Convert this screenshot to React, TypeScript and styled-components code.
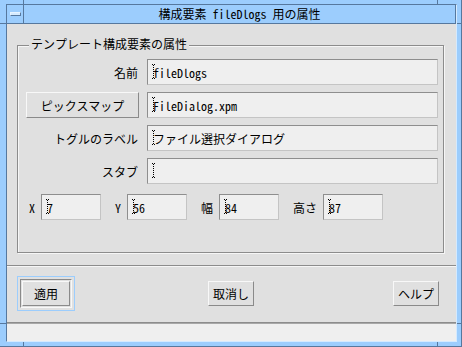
import React from 'react';
import styled, { createGlobalStyle } from 'styled-components';

const DARK = '#56789e';
const BLUE = '#9ccdfd';
const LIGHTBLUE = '#d4eaff';
const GRAY = '#e0e0e0';
const MONO = `"Noto Sans Mono CJK JP", "Noto Sans CJK JP", "DejaVu Sans Mono", monospace`;
const SANS = `"Noto Sans CJK JP", "Noto Sans", sans-serif`;

const Global = createGlobalStyle`
  html, body { margin: 0; padding: 0; background: ${BLUE}; }
  body { font-family: ${SANS}; }
`;

const Frame = styled.div`
  position: relative;
  box-sizing: border-box;
  width: 462px;
  height: 347px;
  background: ${BLUE};
  border-right: 1px solid ${DARK};
  border-bottom: 1px solid ${DARK};
  padding: 4px 4px 4px 6px;
  display: flex;
`;

const Mark = styled.div<{ $x: number; $y: number; $w: number; $h: number }>`
  position: absolute;
  left: ${p => p.$x}px;
  top: ${p => p.$y}px;
  width: ${p => p.$w}px;
  height: ${p => p.$h}px;
  background: ${DARK};
`;

const Inner = styled.div`
  flex: 1;
  display: flex;
  flex-direction: column;
  box-sizing: border-box;
  border-top: 1px solid ${DARK};
  border-left: 1px solid ${DARK};
  border-right: 1px solid ${LIGHTBLUE};
  border-bottom: 1px solid ${LIGHTBLUE};
`;

const TitleBar = styled.div`
  display: flex;
  height: 19px;
  flex: none;
  box-sizing: border-box;
  border-bottom: 1px solid ${DARK};
  background: ${BLUE};
`;

const MenuButton = styled.div`
  width: 17px;
  box-sizing: border-box;
  border-right: 1px solid ${DARK};
  display: flex;
  align-items: center;
  justify-content: center;
`;

const MenuBar = styled.div`
  width: 9px;
  height: 2px;
  background: ${LIGHTBLUE};
  border-top: 1px solid #e6f3ff;
  border-left: 1px solid #e6f3ff;
  border-right: 1px solid ${DARK};
  border-bottom: 1px solid ${DARK};
  box-sizing: content-box;
`;

const Title = styled.div`
  flex: 1;
  box-sizing: border-box;
  border-right: 1px solid ${DARK};
  font: 12px/18px ${MONO};
  color: #000;
  text-align: center;
  white-space: nowrap;
`;

const Content = styled.div`
  flex: none;
  height: 298px;
  background: ${GRAY};
  display: flex;
  flex-direction: column;
  padding-top: 21px;
  box-sizing: border-box;
`;

const Group = styled.div`
  position: relative;
  margin: 0 12px 0 10px;
  border: 1px solid #8c8c8c;
  box-shadow: 1px 1px 0 #f6f6f6, inset 1px 1px 0 #f6f6f6;
  padding: 13px 5px 32px 8px;
`;

const Legend = styled.div`
  position: absolute;
  left: 11px;
  top: -10px;
  padding: 0 2px;
  background: ${GRAY};
  font: 12px/16px ${MONO};
  color: #000;
`;

const FormGrid = styled.div`
  display: grid;
  grid-template-columns: 113px 291px;
  column-gap: 8px;
  row-gap: 7px;
  grid-auto-rows: 26px;
`;

const Label = styled.div`
  display: flex;
  align-items: center;
  justify-content: flex-end;
  padding-right: 1px;
  font: 12px ${SANS};
  color: #000;
  white-space: nowrap;
`;

const Field = styled.div<{ $w?: number }>`
  position: relative;
  box-sizing: border-box;
  height: 26px;
  width: ${p => (p.$w ? `${p.$w}px` : 'auto')};
  background: #efefef;
  border: 1px solid;
  border-color: #8e8e8e #c4c4c4 #c4c4c4 #8e8e8e;
  padding-left: 5px;
  display: flex;
  align-items: center;
  font: 12px ${MONO};
  color: #000;
  white-space: nowrap;
  overflow: hidden;
`;

const CursorSvg = styled.svg`
  position: absolute;
  left: 3px;
  top: 4px;
`;

const Cursor = () => (
  <CursorSvg width="5" height="15" viewBox="0 0 5 15">
    <g fill="#000">
      <rect x="1" y="0" width="1" height="1" />
      <rect x="3" y="0" width="1" height="1" />
      <rect x="2" y="1" width="1" height="1" />
      <rect x="2" y="3" width="1" height="1" />
      <rect x="2" y="5" width="1" height="1" />
      <rect x="2" y="7" width="1" height="1" />
      <rect x="2" y="9" width="1" height="1" />
      <rect x="2" y="11" width="1" height="1" />
      <rect x="2" y="13" width="1" height="1" />
      <rect x="1" y="14" width="1" height="1" />
      <rect x="3" y="14" width="1" height="1" />
    </g>
  </CursorSvg>
);

const GeomRow = styled.div`
  display: flex;
  gap: 14px;
  margin-top: 10px;
  padding-left: 3px;
`;

const Pair = styled.div`
  display: flex;
  align-items: center;
  gap: 6px;
`;

const SmallLabel = styled.span<{ $mono?: boolean }>`
  font: 12px ${p => (p.$mono ? MONO : SANS)};
  color: #000;
  white-space: nowrap;
`;

const Button = styled.div<{ $w: number; $h: number; $end?: boolean }>`
  box-sizing: border-box;
  width: ${p => p.$w}px;
  height: ${p => p.$h}px;
  justify-self: ${p => (p.$end ? 'end' : 'start')};
  background: ${GRAY};
  border: 1px solid;
  border-color: #f8f8f8 #8a8a8a #8a8a8a #f8f8f8;
  display: flex;
  align-items: center;
  justify-content: center;
  font: 12px ${SANS};
  color: #000;
  white-space: nowrap;
`;

const Separator = styled.div`
  margin-top: 12px;
  height: 0;
  border-top: 1px solid #8c8c8c;
  border-bottom: 1px solid #f6f6f6;
`;

const ButtonRow = styled.div`
  display: grid;
  grid-template-columns: 191px 46px 1fr;
  align-items: center;
  margin-top: 9px;
  height: 35px;
  padding: 0 17px 0 10px;
`;

const FocusRing = styled.div`
  border: 1px solid ${BLUE};
  padding: 2px;
  justify-self: start;
`;

const DefaultRing = styled.div`
  border: 1px solid;
  border-color: #8a8a8a #f8f8f8 #f8f8f8 #8a8a8a;
  padding: 1px;
`;

const StatusBar = styled.div`
  flex: 1;
  background: #efefef;
  border-top: 1px solid #8c8c8c;
  box-shadow: inset 0 1px 0 #a8a8a8;
`;

export default function App() {
  return (
    <>
      <Global />
      <Frame>
        <Mark $x={23} $y={0} $w={1} $h={4} />
        <Mark $x={0} $y={23} $w={6} $h={1} />
        <Mark $x={437} $y={0} $w={1} $h={4} />
        <Mark $x={457} $y={23} $w={4} $h={1} />
        <Mark $x={0} $y={323} $w={6} $h={1} />
        <Mark $x={457} $y={323} $w={4} $h={1} />
        <Mark $x={23} $y={342} $w={1} $h={4} />
        <Mark $x={437} $y={342} $w={1} $h={4} />
        <Inner>
          <TitleBar>
            <MenuButton>
              <MenuBar />
            </MenuButton>
            <Title>構成要素 fileDlogs 用の属性</Title>
          </TitleBar>
          <Content>
            <Group>
              <Legend>テンプレート構成要素の属性</Legend>
              <FormGrid>
                <Label>名前</Label>
                <Field>
                  <Cursor />
                  fileDlogs
                </Field>
                <Button $w={113} $h={26}>ピックスマップ</Button>
                <Field>
                  <Cursor />
                  FileDialog.xpm
                </Field>
                <Label>トグルのラベル</Label>
                <Field>
                  <Cursor />
                  ファイル選択ダイアログ
                </Field>
                <Label>スタブ</Label>
                <Field>
                  <Cursor />
                </Field>
              </FormGrid>
              <GeomRow>
                <Pair>
                  <SmallLabel $mono>X</SmallLabel>
                  <Field $w={60}>
                    <Cursor />7
                  </Field>
                </Pair>
                <Pair>
                  <SmallLabel $mono>Y</SmallLabel>
                  <Field $w={60}>
                    <Cursor />56
                  </Field>
                </Pair>
                <Pair>
                  <SmallLabel>幅</SmallLabel>
                  <Field $w={60}>
                    <Cursor />84
                  </Field>
                </Pair>
                <Pair>
                  <SmallLabel>高さ</SmallLabel>
                  <Field $w={60}>
                    <Cursor />87
                  </Field>
                </Pair>
              </GeomRow>
            </Group>
            <Separator />
            <ButtonRow>
              <FocusRing>
                <DefaultRing>
                  <Button $w={48} $h={25}>適用</Button>
                </DefaultRing>
              </FocusRing>
              <Button $w={46} $h={25}>取消し</Button>
              <Button $w={46} $h={25} $end>ヘルプ</Button>
            </ButtonRow>
          </Content>
          <StatusBar />
        </Inner>
      </Frame>
    </>
  );
}
